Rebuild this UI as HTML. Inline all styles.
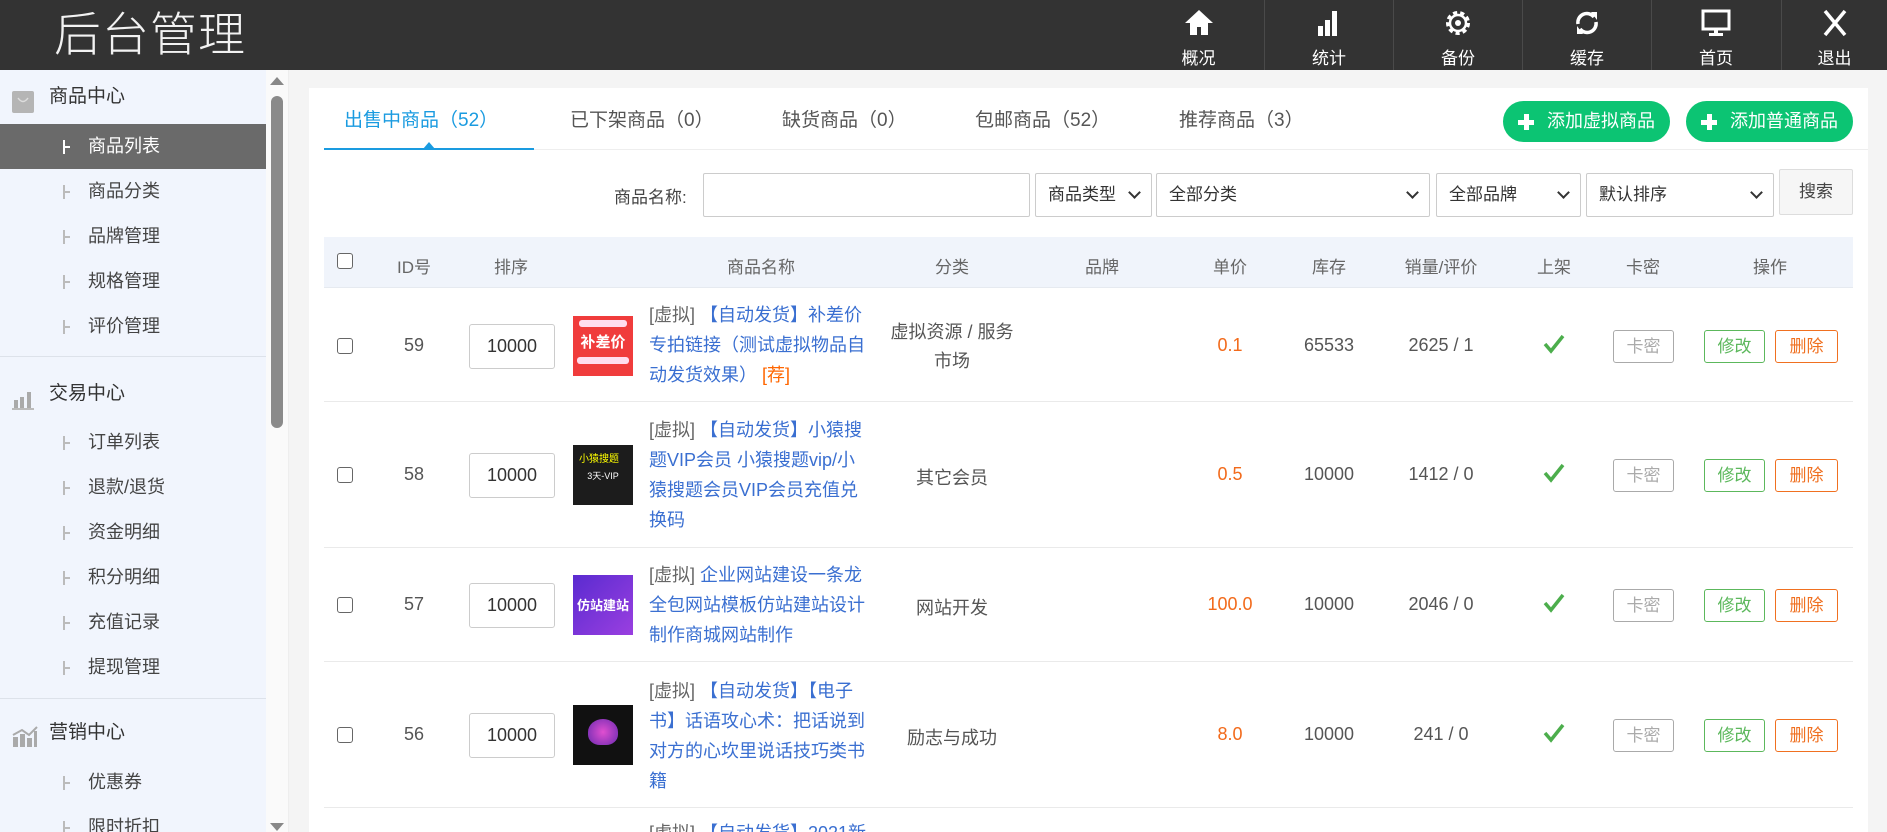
<!DOCTYPE html>
<html style="width:1887px;height:832px;overflow:hidden"><head><meta charset="utf-8">
<style>
*{margin:0;padding:0;box-sizing:border-box}
body{width:1887px;height:832px;overflow:hidden;background:#f4f4f4;font-family:"Liberation Sans","Noto Sans CJK SC",sans-serif;color:#555;position:relative}
.hdr{position:absolute;left:0;top:0;width:1887px;height:70px;background:#333}
.logo{position:absolute;left:54px;top:5px;font-size:47px;color:#f2f2f2;letter-spacing:1px;font-weight:300;line-height:60px}
.nav{position:absolute;top:0;height:70px;width:129px;text-align:center;color:#fff;font-size:17px;border-left:1px solid #4a4a4a}
.nav svg{display:block;margin:6px auto 0;}
.nav span{display:block;margin-top:4px}
.side{position:absolute;left:0;top:70px;width:266px;height:762px;background:#f1f5fd;overflow:hidden}
.sec{position:absolute;left:0;width:266px;height:44px;font-size:19px;color:#333;padding-left:49px;line-height:44px}
.sec i{position:absolute;left:12px;top:11px}
.it{position:absolute;left:0;width:266px;height:45px;line-height:45px;font-size:18px;color:#444;padding-left:88px}
.it:before{content:"";position:absolute;left:63px;top:16px;width:2px;height:14px;background:#bbb}
.it:after{content:"";position:absolute;left:63px;top:22px;width:7px;height:2px;background:#bbb}
.it.act{background:#6a6a6a;color:#fff}
.it.act:before,.it.act:after{background:#fff}
.div{position:absolute;left:0;width:266px;height:1px;background:#dde2ea}
.sb{position:absolute;left:266px;top:70px;width:23px;height:762px;background:#fafafa;border-right:1px solid #eee}
.thumb{position:absolute;left:271px;top:96px;width:12px;height:332px;background:#8a8a8a;border-radius:6px}
.panel{position:absolute;left:309px;top:88px;width:1559px;height:744px;background:#fff;overflow:hidden}
.tab{position:absolute;top:105px;font-size:19px;color:#555}
.btn-add{position:absolute;top:101px;height:41px;width:167px;border-radius:21px;background:#0cc473;color:#fff;font-size:18px;line-height:41px;padding-left:44px}
.btn-add:before{content:"";position:absolute;left:15px;top:13px;width:16px;height:16px;background:linear-gradient(#fff,#fff) center/5px 16px no-repeat,linear-gradient(#fff,#fff) center/16px 5px no-repeat}
.fld{position:absolute;top:173px;height:44px;border:1px solid #ccc;border-radius:2px;font-size:17px;color:#333;line-height:42px;padding-left:12px;background:#fff}
.fld.sel:after{content:"";position:absolute;right:12px;top:14px;width:7px;height:7px;border-right:2px solid #333;border-bottom:2px solid #333;transform:rotate(45deg)}
.th{position:absolute;top:237px;left:324px;width:1529px;height:51px;background:#f0f4fb;border-bottom:1px solid #e6eaf0}
.c{position:absolute;text-align:center;transform:translateX(-50%);white-space:nowrap}
.hcell{top:253px;font-size:17px;color:#666}
.cb{position:absolute;width:16px;height:16px;border:1.5px solid #666;border-radius:3px;background:#fff}
.row{position:absolute;left:324px;width:1529px;border-bottom:1px solid #eaeaea}
.t{font-size:18px;color:#555}
.inp{position:absolute;left:469px;width:86px;height:45px;border:1px solid #ccc;border-radius:3px;font-size:18px;line-height:43px;text-align:center;color:#333}
.img{position:absolute;left:573px;width:60px;height:60px;overflow:hidden}
.nm{position:absolute;left:649px;width:220px;font-size:18px;line-height:30px;color:#3a6fd1}
.nm b{font-weight:normal;color:#666}
.nm em{font-style:normal;color:#f60}
.pr{color:#f26a1b}
.sb2{position:absolute;height:33px;width:61px;border:1px solid;border-radius:3px;font-size:17px;line-height:31px;text-align:center}
.km{left:1613px;border-color:#aaa;color:#aaa}
.xg{left:1704px;border-color:#5cb85c;color:#5cb85c}
.sc{left:1775px;width:63px;border-color:#f07020;color:#f07020}
.ck{position:absolute;left:1543px}
</style></head><body>
<div class="hdr">
<div class="logo">后台管理</div>
<div class="nav" style="left:1134px;border-left:none"><svg width="34" height="34" viewBox="0 0 34 34"><path d="M17 4 L3 17 h5 v12 h7 v-8 h4 v8 h7 v-12 h5z" fill="#fff"/></svg><span>概况</span></div>
<div class="nav" style="left:1264px"><svg width="34" height="34" viewBox="0 0 34 34"><rect x="6" y="20" width="5" height="10" fill="#fff"/><rect x="13" y="14" width="5" height="16" fill="#fff"/><rect x="20" y="5" width="5" height="25" fill="#fff"/></svg><span>统计</span></div>
<div class="nav" style="left:1393px"><svg width="34" height="34" viewBox="0 0 34 34"><circle cx="17" cy="17" r="10" fill="none" stroke="#fff" stroke-width="4" stroke-dasharray="4 3"/><circle cx="17" cy="17" r="8" fill="none" stroke="#fff" stroke-width="2.5"/><circle cx="17" cy="17" r="3" fill="#fff"/></svg><span>备份</span></div>
<div class="nav" style="left:1522px"><svg width="34" height="34" viewBox="0 0 34 34"><path d="M8 18 A9 9 0 0 1 24 11" fill="none" stroke="#fff" stroke-width="3.5"/><path d="M21 6 l6 0 l0 8z" fill="#fff"/><path d="M26 16 A9 9 0 0 1 10 23" fill="none" stroke="#fff" stroke-width="3.5"/><path d="M13 28 l-6 0 l0 -8z" fill="#fff"/></svg><span>缓存</span></div>
<div class="nav" style="left:1651px"><svg width="34" height="34" viewBox="0 0 34 34"><rect x="4" y="5" width="26" height="18" fill="none" stroke="#fff" stroke-width="3"/><rect x="15" y="23" width="4" height="5" fill="#fff"/><rect x="10" y="27" width="14" height="3" fill="#fff"/></svg><span>首页</span></div>
<div class="nav" style="left:1781px;width:106px"><svg width="34" height="34" viewBox="0 0 34 34"><path d="M7 5 L27 29 M27 5 L7 29" stroke="#fff" stroke-width="3.5"/></svg><span>退出</span></div>
</div>

<div class="side">
<div class="sec" style="top:5px"><i><svg width="22" height="22"><rect x="0" y="0" width="22" height="22" rx="2" fill="#b5b5b5"/><path d="M6 7 q5 7 10 0" fill="none" stroke="#ddd" stroke-width="1.5"/></svg></i>商品中心</div>
<div class="it act" style="top:54px">商品列表</div>
<div class="it" style="top:99px">商品分类</div>
<div class="it" style="top:144px">品牌管理</div>
<div class="it" style="top:189px">规格管理</div>
<div class="it" style="top:234px">评价管理</div>
<div class="div" style="top:286px"></div>
<div class="sec" style="top:302px"><i><svg width="24" height="22"><rect x="2" y="12" width="4" height="8" fill="#aaa"/><rect x="8" y="9" width="4" height="11" fill="#aaa"/><rect x="15" y="4" width="4" height="16" fill="#aaa"/><rect x="0" y="20" width="22" height="2" fill="#bbb"/></svg></i>交易中心</div>
<div class="it" style="top:350px">订单列表</div>
<div class="it" style="top:395px">退款/退货</div>
<div class="it" style="top:440px">资金明细</div>
<div class="it" style="top:485px">积分明细</div>
<div class="it" style="top:530px">充值记录</div>
<div class="it" style="top:575px">提现管理</div>
<div class="div" style="top:628px"></div>
<div class="sec" style="top:641px"><i><svg width="26" height="24"><path d="M1 22 V12 h5 v10z M8 22 V9 h5 v13z M15 22 V13 h5 v9z M22 22 V6 h3 v16z" fill="#aaa"/><path d="M1 10 L10 5 L17 10 L25 2" stroke="#aaa" stroke-width="2" fill="none"/></svg></i>营销中心</div>
<div class="it" style="top:690px">优惠券</div>
<div class="it" style="top:735px">限时折扣</div>
</div>
<div class="sb"></div>
<svg style="position:absolute;left:270px;top:76px" width="14" height="10"><path d="M0 9 L7 1 L14 9z" fill="#888"/></svg>
<svg style="position:absolute;left:270px;top:822px" width="14" height="10"><path d="M0 1 L7 9 L14 1z" fill="#888"/></svg>
<div class="thumb"></div>

<div class="panel"><div class="nm" style="top:730px;left:340px"><b>[虚拟]</b> 【自动发货】2021新版正</div></div>
<div style="position:absolute;left:324px;top:149px;width:1544px;height:1px;background:#eee"></div>
<div style="position:absolute;left:324px;top:148px;width:210px;height:2px;background:#1a9be0"></div>
<svg style="position:absolute;left:423px;top:141px" width="12" height="8"><path d="M0 8 L6 1 L12 8z" fill="#1a9be0"/></svg>
<div class="tab" style="left:344px;color:#1a9be0">出售中商品（52）</div>
<div class="tab" style="left:570px">已下架商品（0）</div>
<div class="tab" style="left:782px">缺货商品（0）</div>
<div class="tab" style="left:975px">包邮商品（52）</div>
<div class="tab" style="left:1179px">推荐商品（3）</div>
<div class="btn-add" style="left:1503px">添加虚拟商品</div>
<div class="btn-add" style="left:1686px">添加普通商品</div>

<div style="position:absolute;left:614px;top:183px;font-size:17px;color:#444">商品名称:</div>
<div class="fld" style="left:703px;width:327px"></div>
<div class="fld sel" style="left:1035px;width:117px">商品类型</div>
<div class="fld sel" style="left:1156px;width:274px">全部分类</div>
<div class="fld sel" style="left:1436px;width:145px">全部品牌</div>
<div class="fld sel" style="left:1586px;width:188px">默认排序</div>
<div style="position:absolute;left:1779px;top:169px;width:74px;height:46px;border:1px solid #ddd;border-radius:2px;background:#f6f6f6;font-size:17px;line-height:44px;text-align:center;color:#444">搜索</div>

<div class="th"></div>
<div class="cb" style="left:337px;top:253px"></div>
<div class="c hcell" style="left:414px">ID号</div>
<div class="c hcell" style="left:511px">排序</div>
<div class="c hcell" style="left:761px">商品名称</div>
<div class="c hcell" style="left:952px">分类</div>
<div class="c hcell" style="left:1102px">品牌</div>
<div class="c hcell" style="left:1230px">单价</div>
<div class="c hcell" style="left:1329px">库存</div>
<div class="c hcell" style="left:1441px">销量/评价</div>
<div class="c hcell" style="left:1554px">上架</div>
<div class="c hcell" style="left:1643px">卡密</div>
<div class="c hcell" style="left:1770px">操作</div>

<div class="row" style="top:289px;height:113px"></div>
<div class="row" style="top:402px;height:146px"></div>
<div class="row" style="top:548px;height:114px"></div>
<div class="row" style="top:662px;height:146px"></div>

<div class="cb" style="left:337px;top:338px"></div>
<div class="c t" style="left:414px;top:335px">59</div>
<div class="inp" style="top:324px">10000</div>
<div class="img" style="top:316px;background:#f03c3c"><div style="margin:4px 6px 0;height:7px;background:#fde;border-radius:3px"></div><div style="color:#fff;font-size:15px;font-weight:bold;text-align:center;margin-top:4px">补差价</div><div style="margin:5px 4px 0;height:7px;background:#fde;border-radius:3px"></div></div>
<div class="nm" style="top:300px"><b>[虚拟]</b> 【自动发货】补差价专拍链接（测试虚拟物品自动发货效果） <em>[荐]</em></div>
<div class="c t" style="left:952px;top:318px;line-height:29px">虚拟资源 / 服务<br>市场</div>
<div class="c t pr" style="left:1230px;top:335px">0.1</div>
<div class="c t" style="left:1329px;top:335px">65533</div>
<div class="c t" style="left:1441px;top:335px">2625 / 1</div>

<div class="cb" style="left:337px;top:467px"></div>
<div class="c t" style="left:414px;top:464px">58</div>
<div class="inp" style="top:453px">10000</div>
<div class="img" style="top:445px;background:#1c1c1c"><div style="color:#ff0;font-size:10px;margin:5px 0 0 6px">小猿搜题</div><div style="color:#fff;font-size:9px;text-align:center;margin-top:4px">3天-VIP</div></div>
<div class="nm" style="top:415px"><b>[虚拟]</b> 【自动发货】小猿搜题VIP会员 小猿搜题vip/小猿搜题会员VIP会员充值兑换码</div>
<div class="c t" style="left:952px;top:464px">其它会员</div>
<div class="c t pr" style="left:1230px;top:464px">0.5</div>
<div class="c t" style="left:1329px;top:464px">10000</div>
<div class="c t" style="left:1441px;top:464px">1412 / 0</div>

<div class="cb" style="left:337px;top:597px"></div>
<div class="c t" style="left:414px;top:594px">57</div>
<div class="inp" style="top:583px">10000</div>
<div class="img" style="top:575px;background:linear-gradient(135deg,#5a2bd0,#9a3fe0)"><div style="color:#fff;font-size:13px;font-weight:bold;text-align:center;margin-top:20px">仿站建站</div></div>
<div class="nm" style="top:560px"><b>[虚拟]</b> 企业网站建设一条龙全包网站模板仿站建站设计制作商城网站制作</div>
<div class="c t" style="left:952px;top:594px">网站开发</div>
<div class="c t pr" style="left:1230px;top:594px">100.0</div>
<div class="c t" style="left:1329px;top:594px">10000</div>
<div class="c t" style="left:1441px;top:594px">2046 / 0</div>

<div class="cb" style="left:337px;top:727px"></div>
<div class="c t" style="left:414px;top:724px">56</div>
<div class="inp" style="top:713px">10000</div>
<div class="img" style="top:705px;background:#111"><div style="margin:14px auto 0;width:30px;height:26px;background:radial-gradient(circle,#e04fd0,#6a2ab0);border-radius:50% 50% 40% 40%"></div></div>
<div class="nm" style="top:676px"><b>[虚拟]</b> 【自动发货】【电子书】话语攻心术：把话说到对方的心坎里说话技巧类书籍</div>
<div class="c t" style="left:952px;top:724px">励志与成功</div>
<div class="c t pr" style="left:1230px;top:724px">8.0</div>
<div class="c t" style="left:1329px;top:724px">10000</div>
<div class="c t" style="left:1441px;top:724px">241 / 0</div>

<svg class="ck" style="top:334px" width="22" height="20"><path d="M2 10 L8 17 L20 2" fill="none" stroke="#4cae4c" stroke-width="3.5"/></svg>
<svg class="ck" style="top:463px" width="22" height="20"><path d="M2 10 L8 17 L20 2" fill="none" stroke="#4cae4c" stroke-width="3.5"/></svg>
<svg class="ck" style="top:593px" width="22" height="20"><path d="M2 10 L8 17 L20 2" fill="none" stroke="#4cae4c" stroke-width="3.5"/></svg>
<svg class="ck" style="top:723px" width="22" height="20"><path d="M2 10 L8 17 L20 2" fill="none" stroke="#4cae4c" stroke-width="3.5"/></svg>
<div class="sb2 km" style="top:330px">卡密</div><div class="sb2 xg" style="top:330px">修改</div><div class="sb2 sc" style="top:330px">删除</div>
<div class="sb2 km" style="top:459px">卡密</div><div class="sb2 xg" style="top:459px">修改</div><div class="sb2 sc" style="top:459px">删除</div>
<div class="sb2 km" style="top:589px">卡密</div><div class="sb2 xg" style="top:589px">修改</div><div class="sb2 sc" style="top:589px">删除</div>
<div class="sb2 km" style="top:719px">卡密</div><div class="sb2 xg" style="top:719px">修改</div><div class="sb2 sc" style="top:719px">删除</div>
</body></html>
